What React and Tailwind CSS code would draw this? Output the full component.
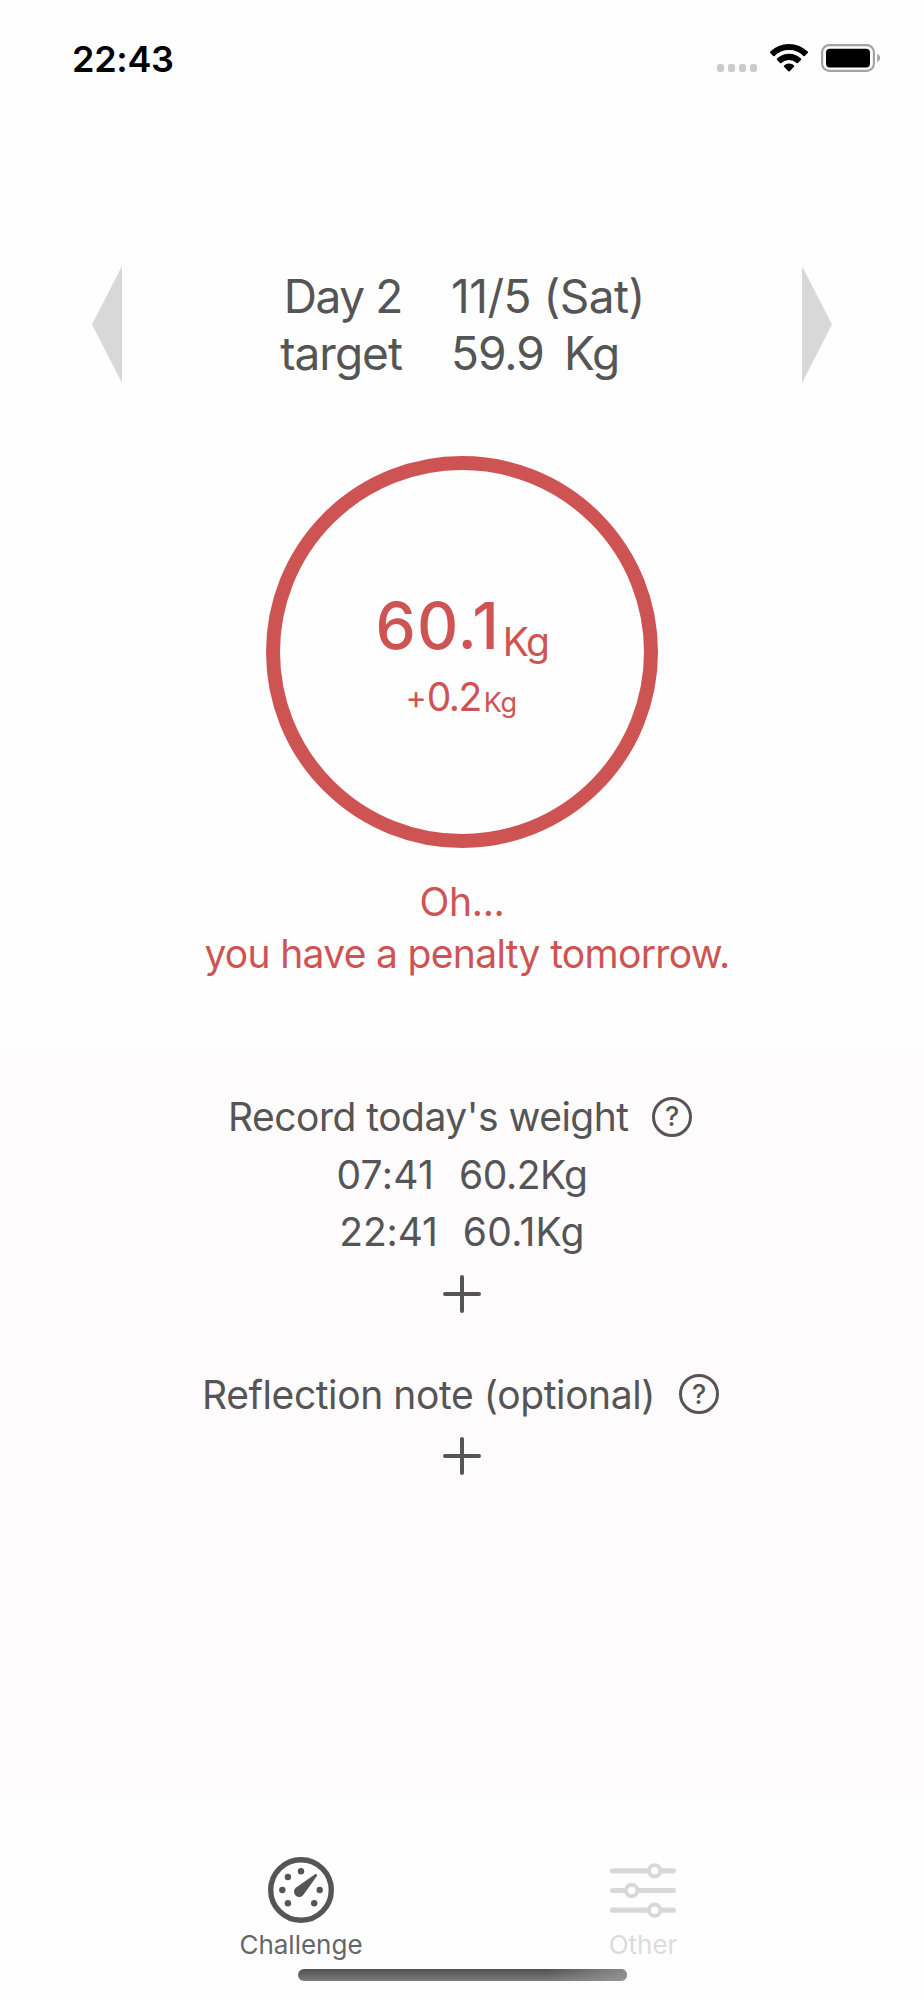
function WifiIcon() {
  return (
    <svg width="38" height="29" viewBox="0 0 38 29" fill="#000">
      <path d="M19 0C26.300 0 32.900 2.900 37.700 7.600a1 1 0 0 1 0 1.400l-2.900 2.900a1 1 0 0 1-1.400 0A20.500 20.500 0 0 0 19 6.100 20.500 20.500 0 0 0 4.600 11.900a1 1 0 0 1-1.400 0L.300 9a1 1 0 0 1 0-1.400A26.600 26.600 0 0 1 19 0Z" />
      <path d="M19 9.800c4.600 0 8.800 1.800 11.900 4.800a1 1 0 0 1 0 1.400l-2.900 2.900a1 1 0 0 1-1.400 0A11 11 0 0 0 19 15.900a11 11 0 0 0-7.600 3 1 1 0 0 1-1.400 0L7.100 16a1 1 0 0 1 0-1.400A17 17 0 0 1 19 9.800Z" />
      <path d="M19 19.500c1.900 0 3.700.700 5 1.900a1 1 0 0 1 0 1.400l-4.300 4.400a1 1 0 0 1-1.400 0L14 22.800a1 1 0 0 1 0-1.400 7.400 7.400 0 0 1 5-1.900Z" />
    </svg>
  );
}

function BatteryIcon() {
  return (
    <svg width="60" height="28" viewBox="0 0 60 28">
      <rect x="1.100" y="1.100" width="51.800" height="25.800" rx="7.200" fill="none" stroke="#a3a3a3" strokeWidth="2.200" />
      <rect x="5" y="4.700" width="44" height="18.800" rx="4" fill="#000" />
      <path d="M56.200 9.800v8.400c1.700-.700 2.900-2.300 2.900-4.200s-1.200-3.500-2.900-4.200Z" fill="#a3a3a3" />
    </svg>
  );
}

function StatusBar() {
  return (
    <header className="flex h-[116px] shrink-0 items-center justify-between pl-[72px] pr-[43px]">
      <span className="pt-[2px] text-[36px] leading-9 font-semibold tracking-[-0.3px] text-black">22:43</span>
      <div className="flex items-center">
        <div className="mt-5 mr-[13px] flex gap-[3.5px]">
          {[0, 1, 2, 3].map((i) => (
            <span key={i} className="h-[7.5px] w-[7.5px] rounded-[2.5px] bg-[#cbcbcb]" />
          ))}
        </div>
        <WifiIcon />
        <span className="w-[13px]" />
        <BatteryIcon />
      </div>
    </header>
  );
}

function DayPicker() {
  return (
    <section className="mt-[150px] flex h-[117px] shrink-0 items-center pl-[92px] text-[46px] leading-[56px] whitespace-pre">
      <svg width="30" height="117" viewBox="0 0 30 117" fill="#d8d8d8">
        <path d="M30 0v117L0 58.500Z" />
      </svg>
      <div className="w-[280px] text-right">
        <div className="tracking-[-1.4px]">Day 2</div>
        <div className="mt-px tracking-[-1px]">target</div>
      </div>
      <div className="w-[400px] pl-[49px]">
        <div className="tracking-[-0.5px]">11/5 (Sat)</div>
        <div className="mt-px flex tracking-[-1px]">
          <span className="w-[113px]">59.9</span>
          <span>Kg</span>
        </div>
      </div>
      <svg width="30" height="117" viewBox="0 0 30 117" fill="#d8d8d8">
        <path d="M0 0v117L30 58.500Z" />
      </svg>
    </section>
  );
}

function WeightRing() {
  return (
    <section className="mt-[73px] flex h-[392px] w-[392px] shrink-0 flex-col items-center self-center rounded-full border-[14px] border-[#ce5454] pt-[124px] text-[#ce5454]">
      <div className="flex items-end">
        <span className="text-[64px] leading-[64px] font-medium tracking-[1px]">60.1</span>
        <span className="ml-[3px] text-[39px] leading-[33px] tracking-[-1.5px]">Kg</span>
      </div>
      <div className="mt-[19px] mr-[2px] flex items-end">
        <span className="text-[32px] leading-[37px]">+</span>
        <span className="text-[39px] leading-[39px] tracking-[-1.5px]">0.2</span>
        <span className="ml-[3px] text-[27px] leading-[26px] tracking-[-0.5px]">Kg</span>
      </div>
    </section>
  );
}

function HelpIcon() {
  return (
    <span className="flex h-10 w-10 items-center justify-center rounded-full border-[3px] border-[#555] text-[27px] leading-none font-medium">
      ?
    </span>
  );
}

function PlusIcon() {
  return (
    <svg className="self-center" width="38" height="38" viewBox="0 0 38 38" stroke="#555" strokeWidth="4" strokeLinecap="round">
      <path d="M19 2v34M2 19h34" />
    </svg>
  );
}

function Records() {
  return (
    <section className="mt-[66px] flex h-[755px] shrink-0 flex-col bg-[#fefbfd] pt-[42px] text-[39px] leading-[57.5px] whitespace-pre">
      <div className="flex items-center pl-[228px]">
        <h2 className="w-[424px] tracking-[-0.5px]">Record today's weight</h2>
        <HelpIcon />
      </div>
      <div className="flex justify-center gap-[25px]">
        <span className="tracking-[0.3px]">07:41</span>
        <span className="tracking-[-0.5px]">60.2Kg</span>
      </div>
      <div className="flex justify-center gap-[25px]">
        <span className="tracking-[-0.1px]">22:41</span>
        <span className="tracking-[0.3px]">60.1Kg</span>
      </div>
      <div className="mt-[14px] flex flex-col">
        <PlusIcon />
      </div>
      <div className="mt-[53px] flex items-center pl-[202px]">
        <h2 className="w-[477px] tracking-[-0.4px]">Reflection note (optional)</h2>
        <HelpIcon />
      </div>
      <div className="mt-[14px] flex flex-col">
        <PlusIcon />
      </div>
    </section>
  );
}

function GaugeIcon() {
  return (
    <svg width="66" height="66" viewBox="0 0 66 66" fill="#555">
      <circle cx="33" cy="33" r="30.300" fill="none" stroke="#555" strokeWidth="5.400" />
      <circle cx="33" cy="14.300" r="3.200" />
      <circle cx="19.900" cy="20" r="3.200" />
      <circle cx="14.300" cy="33" r="3.200" />
      <circle cx="51.700" cy="33" r="3.200" />
      <circle cx="19.900" cy="46.200" r="3.200" />
      <circle cx="46.200" cy="46.200" r="3.200" />
      <path d="M27.800 30.700 47 17.200c1.300-.900 2.700.400 1.900 1.800L36 37.100a5.300 5.300 0 1 1-8.200-6.400Z" />
    </svg>
  );
}

function SlidersIcon() {
  return (
    <svg width="66" height="66" viewBox="0 0 66 66" fill="#fff" stroke="#d8d8d8" strokeLinecap="round">
      <path d="M2.600 13.800h60.800M2.600 33.500h60.800M2.600 53.200h60.800" strokeWidth="5.200" />
      <g strokeWidth="3.900">
        <circle cx="44.700" cy="13.800" r="5.700" />
        <circle cx="21.700" cy="33.500" r="5.700" />
        <circle cx="44.700" cy="53.200" r="5.700" />
      </g>
    </svg>
  );
}

function TabBar() {
  return (
    <nav className="flex shrink-0 flex-col pt-[56px]">
      <div className="flex pl-[130px] text-[26px] leading-8">
        <div className="flex w-[342px] flex-col items-center gap-[6px]">
          <GaugeIcon />
          <span className="text-[#666]">Challenge</span>
        </div>
        <div className="flex w-[342px] flex-col items-center gap-[6px]">
          <SlidersIcon />
          <span className="text-[#dcdcdc]">Other</span>
        </div>
      </div>
      <div className="mt-2 flex h-3 w-[329px] justify-end self-center overflow-hidden rounded-full bg-linear-to-b from-[#505050] to-[#7c7c7c]">
        <div className="h-3 w-20 bg-linear-to-r from-[#a0a0a0]/0 to-[#a0a0a0]/70" />
      </div>
    </nav>
  );
}

export default function App() {
  return (
    <main className="flex h-[2000px] w-[924px] flex-col overflow-hidden bg-[#fefefe] font-['Inter',sans-serif] text-[#555]">
      <StatusBar />
      <DayPicker />
      <WeightRing />
      <div className="mt-[28px] text-center text-[39px] leading-[52px] text-[#ce5454]">
        <p className="tracking-[-0.3px]">Oh...</p>
        <p className="pl-[10px] tracking-[-0.68px]">you have a penalty tomorrow.</p>
      </div>
      <Records />
      <TabBar />
    </main>
  );
}
